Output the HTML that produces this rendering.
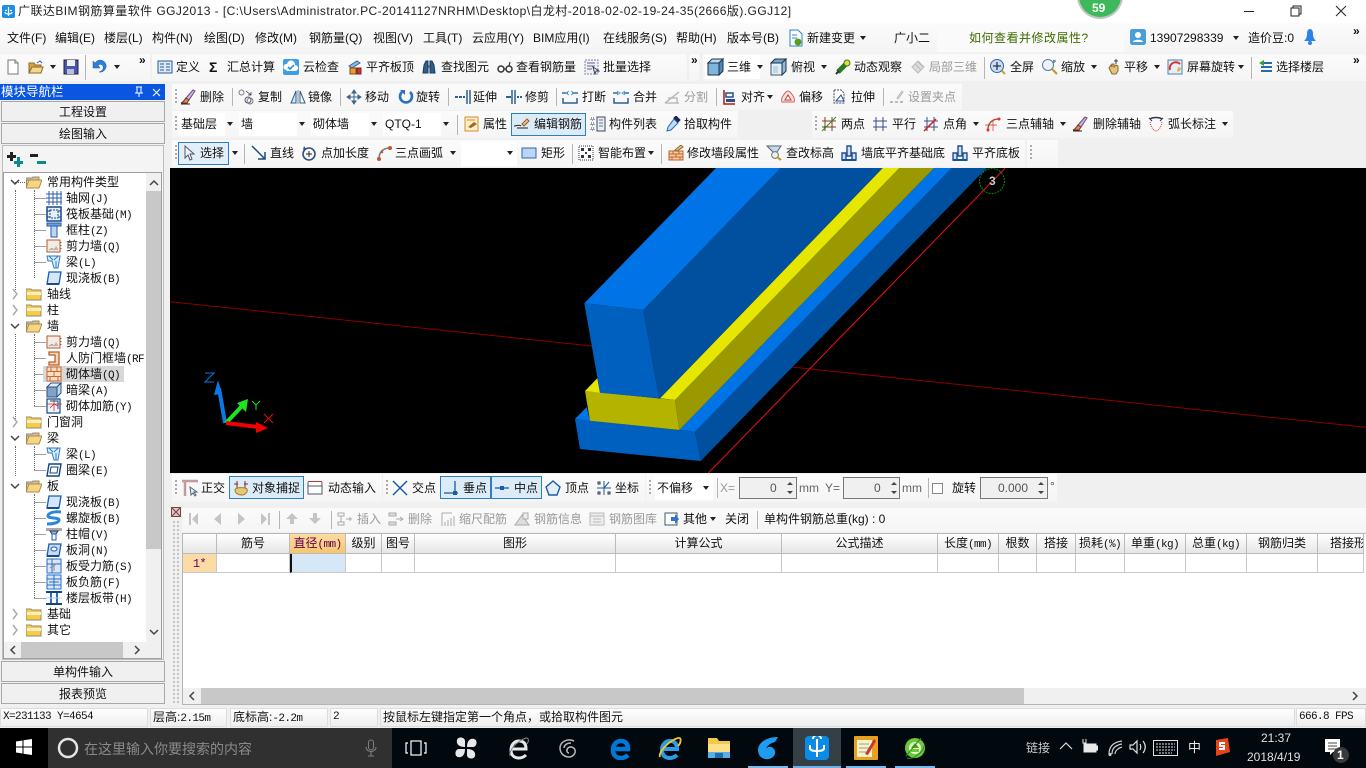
<!DOCTYPE html>
<html lang="zh"><head><meta charset="utf-8"><title>GGJ2013</title>
<style>
html,body{margin:0;padding:0;width:1366px;height:768px;overflow:hidden;background:#f0f0f0}
body{position:relative;font:12px/16px "Liberation Sans","WenQuanYi Zen Hei","Noto Sans CJK SC",sans-serif;color:#111}
.t{position:absolute;white-space:nowrap;height:16px;line-height:16px}
.g{color:#9a9a9a}
.a{position:absolute;width:0;height:0;border:3px solid transparent;border-top:4px solid #222;border-bottom:0}
.s{position:absolute;background:linear-gradient(#fbfbfb,#f5f5f5)}
.b{position:absolute;box-sizing:border-box}
.w{position:absolute;background:#fff}
.sp{position:absolute;width:1px;background:#b5b5b5}
.dots{position:absolute;width:2px;background:repeating-linear-gradient(#aaa 0 2px,transparent 2px 4px)}
svg.u{position:absolute;width:16px;height:16px;overflow:visible}
.m{font:11px/16px "Liberation Mono",monospace;letter-spacing:-.6px}
.btn{position:absolute;left:1px;width:164px;height:21px;box-sizing:border-box;background:#f0f0f0;border:1px solid #a8a8a8;text-align:center;line-height:21px;font-size:12px}
.hc{position:absolute;top:534px;height:20px;box-sizing:border-box;border-right:1px solid #bbb;border-bottom:1px solid #bbb;background:linear-gradient(#fff,#e6e6e6);text-align:center;line-height:19px;overflow:hidden;white-space:nowrap}
.rc{position:absolute;top:554px;height:19px;box-sizing:border-box;border-right:1px solid #c8c8c8;border-bottom:1px solid #c8c8c8;background:#fff}
.st{position:absolute;top:708px;height:19px;box-sizing:border-box;border:1px solid #dcdcdc;background:linear-gradient(#fff,#eee);line-height:17px;padding-left:2px;white-space:nowrap;overflow:hidden}
.bar{position:absolute;top:766px;height:2px;background:#76b9ed}
</style></head>
<body>
<svg width="0" height="0" style="position:absolute">
<defs>
<symbol id="new" viewBox="0 0 16 16"><path d="M3 1h7l3 3v11H3z" fill="#fff" stroke="#777"/><path d="M10 1v3h3" fill="#ddd" stroke="#777"/></symbol>
<symbol id="open" viewBox="0 0 16 16"><path d="M1 4h5l1 2h6v8H1z" fill="#d9a441" stroke="#8a6a2a"/><path d="M1 14l3-6h11l-2 6z" fill="#f4d88a" stroke="#8a6a2a"/><path d="M9 4l3-2 2 2" fill="none" stroke="#2a62b8"/></symbol>
<symbol id="save" viewBox="0 0 16 16"><path d="M1 1h14v14H1z" fill="#4a55b0" stroke="#223"/><path d="M4 1h8v6H4z" fill="#eee"/><path d="M4 10h7v5H4z" fill="#b8c0d8"/></symbol>
<symbol id="undo" viewBox="0 0 16 16"><path d="M5 3a6 6 0 1 1 2 11c3-1 5-3 4-6-1-2-3-2-5-1l2 3H1V3l2 2z" fill="#2f7fd8" stroke="#1b5aa5" stroke-width=".5"/></symbol>
<symbol id="def" viewBox="0 0 16 16"><path d="M1 2h14v12H1z" fill="#dbe9f8" stroke="#2a5c99"/><path d="M3 5h4M3 8h4M3 11h4M9 5h4M9 8h4M9 11h4" stroke="#2a5c99"/></symbol>
<symbol id="cloud" viewBox="0 0 16 16"><rect x="0" y="0" width="16" height="16" rx="2" fill="#3d9fe6"/><path d="M3 11a3 3 0 0 1 1-6 4 4 0 0 1 8 1 3 3 0 0 1 0 6H4z" fill="#fff"/><path d="M5 8l2 2 4-4" fill="none" stroke="#2580cc" stroke-width="1.5"/></symbol>
<symbol id="flat" viewBox="0 0 16 16"><path d="M2 7l8-5 3 2-8 5z" fill="#8fb6dd" stroke="#37689b"/><path d="M3 9h6v6H3z" fill="#e59b3a" stroke="#8b4513"/><path d="M10 9h4v6h-4z" fill="#c33" stroke="#722"/></symbol>
<symbol id="bino" viewBox="0 0 16 16"><path d="M2 14l1-8 2-4h2v12zM14 14l-1-8-2-4H9v12z" fill="#2f5d8c" stroke="#1c3c60"/><path d="M7 6h2v3H7z" fill="#667"/></symbol>
<symbol id="glass" viewBox="0 0 16 16"><circle cx="4" cy="10" r="3" fill="none" stroke="#333" stroke-width="1.5"/><circle cx="12" cy="10" r="3" fill="none" stroke="#333" stroke-width="1.5"/><path d="M7 10h2M12 7l1-4" stroke="#333" stroke-width="1.2"/></symbol>
<symbol id="batch" viewBox="0 0 16 16"><path d="M1 1h13v14H1z" fill="#eef" stroke="#7a8a99" stroke-dasharray="2 1"/><path d="M3 4h8M3 7h8M3 10h5" stroke="#667"/><path d="M9 8l6 4-3 0-1 3z" fill="#fff" stroke="#345"/></symbol>
<symbol id="cube" viewBox="0 0 18 18"><path d="M1 5h11v12H1z" fill="#7fb4dc" stroke="#234"/><path d="M1 5l4-4h11l-4 4z" fill="#b8d8ef" stroke="#234"/><path d="M12 5l4-4v12l-4 4z" fill="#4c87b8" stroke="#234"/></symbol>
<symbol id="cube2" viewBox="0 0 18 18"><path d="M1 5h11v12H1z" fill="#e2eef8" stroke="#456"/><path d="M1 5l4-4h11l-4 4z" fill="#6fa5d0" stroke="#234"/><path d="M12 5l4-4v12l-4 4z" fill="#8fbbdf" stroke="#234"/><path d="M3 8h5v7H3z" fill="#bcd6ea"/></symbol>
<symbol id="orb" viewBox="0 0 16 16"><path d="M3 13L13 3" stroke="#2d7a20" stroke-width="5"/><circle cx="12" cy="4" r="3" fill="#d7e04a" stroke="#576d10"/><path d="M1 15l3-3" stroke="#234" stroke-width="2"/></symbol>
<symbol id="loc" viewBox="0 0 16 16"><path d="M2 8l6-6 6 6-6 6z" fill="#ddd" stroke="#bbb"/><path d="M5 5l6 6M8 3l5 5" stroke="#bbb"/></symbol>
<symbol id="full" viewBox="0 0 16 16"><circle cx="7" cy="7" r="6.5" fill="#cde" stroke="#36a"/><path d="M7 3v8M3 7h8" stroke="#235" stroke-width="1.3"/><path d="M12 12l3 3" stroke="#d79b2c" stroke-width="2"/></symbol>
<symbol id="zoom" viewBox="0 0 16 16"><circle cx="6" cy="6" r="5.5" fill="#eef4fa" stroke="#5a7fa0"/><path d="M10 10l5 5" stroke="#c89320" stroke-width="2"/><path d="M12 1v3M11 2h3" stroke="#36a"/></symbol>
<symbol id="pan" viewBox="0 0 16 16"><path d="M3 9l2-3 1 2V5l2 0v3l2-2 2 1v5l-2 3H6z" fill="#e4c47f" stroke="#85692e"/><path d="M10 0v5M8 2h4" stroke="#345"/></symbol>
<symbol id="rot" viewBox="0 0 16 16"><path d="M1 1h14v14H1z" fill="#e6eff7" stroke="#4a80b8"/><path d="M3 11a6 6 0 0 1 10-6" fill="none" stroke="#d33" stroke-width="2"/><path d="M11 8l3 1-1 3-3 1z" fill="#e2b13c"/></symbol>
<symbol id="floor" viewBox="0 0 16 16"><path d="M3 4h11M3 8h11M3 12h11" stroke="#2b6aa8" stroke-width="2"/><path d="M6 1L1 4l5 3z" fill="#3a9c35"/></symbol>
<symbol id="del" viewBox="0 0 16 16"><path d="M6 9l7-8 2 1-6 9z" fill="#c9b7d6" stroke="#6b4c80"/><path d="M6 9l3 2-2 3H1c3-1 3-3 5-5z" fill="#d98a5a" stroke="#7a3a20"/><path d="M1 15h9" stroke="#222"/></symbol>
<symbol id="copy" viewBox="0 0 16 16"><circle cx="3.5" cy="3.5" r="2.5" fill="none" stroke="#778"/><circle cx="10" cy="11" r="3" fill="none" stroke="#556"/><circle cx="12" cy="12" r="3" fill="none" stroke="#778"/><path d="M8 2l5 4M13 3v3h-3" fill="none" stroke="#334" stroke-width=".8"/></symbol>
<symbol id="mir" viewBox="0 0 16 16"><path d="M1 14L6 2v12z" fill="#d5e4f2" stroke="#2c5f8e"/><path d="M15 14L10 2v12z" fill="#fff" stroke="#2c5f8e"/><path d="M8 1v14" stroke="#888"/></symbol>
<symbol id="mov" viewBox="0 0 16 16"><path d="M8 1v14M1 8h14M8 1L6 4h4zM8 15l-2-3h4zM1 8l3-2v4zM15 8l-3-2v4z" fill="#38668f" stroke="#38668f"/></symbol>
<symbol id="rotate" viewBox="0 0 16 16"><path d="M4 3a6 6 0 1 0 8 0" fill="none" stroke="#2a70c0" stroke-width="2.6"/><path d="M2 1h5v5z" fill="#2a70c0"/></symbol>
<symbol id="ext" viewBox="0 0 16 16"><path d="M0 8h10" stroke="#2e5f92" stroke-dasharray="3 1" stroke-width="2"/><path d="M12 1v14M15 1v14" stroke="#2e5f92" stroke-width="1.5"/></symbol>
<symbol id="trim" viewBox="0 0 16 16"><path d="M0 8h5" stroke="#2e5f92" stroke-width="2"/><path d="M6 1v14M9 1v14" stroke="#2e5f92" stroke-width="1.5"/><path d="M11 8h5" stroke="#2e5f92" stroke-dasharray="2 1" stroke-width="2"/></symbol>
<symbol id="brk" viewBox="0 0 16 16"><path d="M0 4h6M10 4h6" stroke="#2e6ca8" stroke-width="1.5"/><path d="M1 9v5h14V9" fill="none" stroke="#2e5f92" stroke-width="1.5"/><path d="M7 2L4 4l3 2M9 2l3 2-3 2" fill="none" stroke="#4a9fdf"/></symbol>
<symbol id="mrg" viewBox="0 0 16 16"><path d="M0 4h5M11 4h5" stroke="#2e6ca8" stroke-width="1.5"/><path d="M1 9v5h14V9" fill="none" stroke="#2e5f92" stroke-width="1.5"/><path d="M4 2l3 2-3 2M12 2L9 4l3 2" fill="none" stroke="#4a9fdf"/></symbol>
<symbol id="spl" viewBox="0 0 16 16"><path d="M1 14l14-11M1 14h14M4 9h9v5" fill="none" stroke="#bbb" stroke-width="1.5"/></symbol>
<symbol id="ali" viewBox="0 0 16 16"><path d="M2 1v14h11" fill="none" stroke="#b01818" stroke-width="1.5"/><path d="M4 4h7v4H4z" fill="none" stroke="#26508a" stroke-width="1.5"/><path d="M4 10h9v3H4z" fill="#26508a"/></symbol>
<symbol id="off" viewBox="0 0 16 16"><path d="M2 13c-2-4 4-11 6-11s8 7 6 11z" fill="#fbdfd6" stroke="#c66"/><path d="M5 11l3-5 3 5z" fill="#fff" stroke="#b44"/></symbol>
<symbol id="str" viewBox="0 0 16 16"><path d="M3 1h7l3 3v10H3z" fill="#fff" stroke="#446" stroke-dasharray="2 1"/><path d="M5 12l5-6 3 6z" fill="none" stroke="#26508a"/></symbol>
<symbol id="grip" viewBox="0 0 16 16"><path d="M9 9l5-7 1 1-5 7z" fill="#ddd" stroke="#bbb"/><path d="M2 13h3M7 13h3M12 13h3" stroke="#bbb" stroke-width="2"/></symbol>
<symbol id="prop" viewBox="0 0 16 16"><path d="M1 1h13v14H1z" fill="#fbeecb" stroke="#d98f25"/><path d="M4 11l6-5 3 2-6 4z" fill="#a3661e"/><path d="M3 4h8" stroke="#d98f25"/></symbol>
<symbol id="edit" viewBox="0 0 16 16"><path d="M8 8l5-5 2 2-5 5z" fill="#e4c88c" stroke="#a05a20"/><path d="M0 10c3 0 5-2 7 0M3 12h11" stroke="#222" fill="none"/></symbol>
<symbol id="list" viewBox="0 0 16 16"><path d="M7 1h8v14H7z" fill="#e6eff7" stroke="#445"/><path d="M1 2h3v2H1zM1 7h3v2H1zM1 12h3v2H1z" fill="none" stroke="#445" stroke-dasharray="1 1"/><path d="M9 4h4M9 7h4M9 10h4" stroke="#678"/></symbol>
<symbol id="pick" viewBox="0 0 16 16"><path d="M9 3l4 4-7 7-4 1 1-4z" fill="#bcdcf6" stroke="#2a6cb8"/><path d="M9 2l2-2 4 4-2 2z" fill="#225" stroke="#225"/></symbol>
<symbol id="two" viewBox="0 0 16 16"><path d="M4 1v14M11 1v14M1 5h14M1 11h14" stroke="#8b3a1e"/><path d="M1 15L15 1" stroke="#2a8a2a"/><circle cx="4" cy="11" r="1.3" fill="#2a8a2a"/></symbol>
<symbol id="par" viewBox="0 0 16 16"><path d="M4 1v14M11 1v14M1 5h14M1 11h14" stroke="#3a4c8a"/></symbol>
<symbol id="ang" viewBox="0 0 16 16"><path d="M4 1v14M11 1v14M1 5h14M1 11h14" stroke="#3a4c8a"/><path d="M1 15L13 3" stroke="#d42020" stroke-width="1.5"/></symbol>
<symbol id="arc" viewBox="0 0 16 16"><path d="M3 14C3 7 7 3 14 3" fill="none" stroke="#c24a2a" stroke-width="1.5"/><circle cx="3" cy="14" r="1.5" fill="#d33"/><circle cx="14" cy="3" r="1.5" fill="#d33"/><path d="M0 9h12M8 5v10" stroke="#c33" stroke-width=".7"/></symbol>
<symbol id="arcs" viewBox="0 0 16 16"><path d="M3 14C3 7 7 3 14 3" fill="none" stroke="#6a7f8f" stroke-width="1.6"/><circle cx="3" cy="14" r="2" fill="#c8552a"/><circle cx="14" cy="3" r="2" fill="#c8552a"/><circle cx="6" cy="7" r="1.3" fill="#c8552a"/></symbol>
<symbol id="mark" viewBox="0 0 16 16"><path d="M2 3c3-2 9-2 12 0" fill="none" stroke="#335" stroke-width="1.4"/><path d="M2 6c1 6 4 9 6 9s5-3 6-9" fill="none" stroke="#c33" stroke-dasharray="1 1"/><path d="M1 2l3 3M15 2l-3 3" stroke="#335"/></symbol>
<symbol id="sel" viewBox="0 0 16 16"><path d="M3 1v12l3-3 2 5 2-1-2-5h4z" fill="#f0f4fa" stroke="#556"/></symbol>
<symbol id="line" viewBox="0 0 16 16"><path d="M1 1l13 13M14 7v7H7" fill="none" stroke="#1c4a80" stroke-width="1.5"/></symbol>
<symbol id="ptl" viewBox="0 0 16 16"><circle cx="8" cy="9" r="6" fill="none" stroke="#34507a" stroke-width="1.6"/><path d="M8 6v6M5 9h6" stroke="#223"/><path d="M3 1l2 3-3 1z" fill="#34507a"/></symbol>
<symbol id="rect" viewBox="0 0 16 16"><rect x="1" y="3" width="14" height="10" fill="#bcd5f2" stroke="#2f66b0"/></symbol>
<symbol id="smart" viewBox="0 0 16 16"><path d="M1 1h14v14H1z" fill="#fff" stroke="#334" stroke-dasharray="1 1"/><path d="M3 3h3v3H3zM10 3h3v3h-3zM3 10h3v3H3zM10 10h3v3h-3zM7 7h2v2H7z" fill="#334"/></symbol>
<symbol id="brick" viewBox="0 0 16 16"><path d="M1 6h14v9H1z" fill="#f7cfa6" stroke="#c2622c"/><path d="M1 9h14M1 12h14M5 6v3M11 6v3M8 9v3M4 12v3M12 12v3" stroke="#c2622c"/><path d="M7 5l6-5 2 2-6 4z" fill="#dcc58f" stroke="#8d6a2c"/></symbol>
<symbol id="level" viewBox="0 0 16 16"><path d="M1 1h14l-4 6v3l-4 2V7z" fill="#c6dbf0" stroke="#567"/><circle cx="9" cy="10" r="3.4" fill="#eee" stroke="#677"/><path d="M11 12l4 3" stroke="#c08f20" stroke-width="2"/></symbol>
<symbol id="wall" viewBox="0 0 16 16"><path d="M6 1h4v10H6zM1 8h4v7H1zM11 8h4v7h-4z" fill="#cfe0f2" stroke="#214f93" stroke-width="1.4"/><path d="M1 15h14" stroke="#214f93" stroke-width="2"/></symbol>
<symbol id="ortho" viewBox="0 0 18 18"><path d="M1 2h16M4 2v15" stroke="#c49a9a" stroke-width="2.5"/><path d="M9 8l7 5-3 0 2 3-1 1-2-3-2 2z" fill="#e9eef5" stroke="#567"/></symbol>
<symbol id="snap" viewBox="0 0 16 16"><path d="M4 1v10M12 1v10M1 4h4M11 4h4" stroke="#8a2a20"/><path d="M2 10c0-3 10-3 12-1 1 2-1 6-5 6s-7-2-7-5z" fill="#e6c873" stroke="#a07c2c"/></symbol>
<symbol id="dyn" viewBox="0 0 16 16"><path d="M1 2h14" stroke="#c8352c" stroke-width="2"/><path d="M1 2v12h14V2" fill="#fff" stroke="#556"/><path d="M1 6h14" stroke="#556"/></symbol>
<symbol id="cross" viewBox="0 0 16 16"><path d="M1 1l14 14M15 1L1 15" stroke="#1a5aa8" stroke-width="1.5"/></symbol>
<symbol id="perp" viewBox="0 0 16 16"><path d="M1 13h14M12 1v12" stroke="#1a5aa8" stroke-width="1.3"/><rect x="10" y="11" width="4" height="4" fill="#1a5aa8"/></symbol>
<symbol id="mid" viewBox="0 0 16 16"><path d="M1 8h14" stroke="#1a5aa8" stroke-width="1.3"/><rect x="6" y="6" width="4" height="4" fill="#1a5aa8"/></symbol>
<symbol id="vert" viewBox="0 0 16 16"><path d="M8 1l7 6-3 8H4L1 7z" fill="#e2effa" stroke="#1a5aa8" stroke-width="1.4"/></symbol>
<symbol id="coord" viewBox="0 0 16 16"><path d="M8 1v14M1 8h14" stroke="#1a5aa8"/><path d="M8 8l5-6" stroke="#1a5aa8"/><path d="M2 2h2v2H2zM12 12h2v2h-2zM2 12h2v2H2z" fill="none" stroke="#334"/></symbol>
<symbol id="ins" viewBox="0 0 16 16"><path d="M1 2h6v3H1zM1 11h6v3H1zM4 5v6" fill="none" stroke="#aaa"/><path d="M9 8h6M13 6v4" stroke="#aaa"/></symbol>
<symbol id="dl" viewBox="0 0 16 16"><path d="M1 2h7v3H1zM1 11h7v3H1z" fill="#ddd" stroke="#aaa"/><path d="M8 8h7M12 6l3 2-3 2" fill="none" stroke="#aaa"/></symbol>
<symbol id="sc" viewBox="0 0 16 16"><path d="M2 2h10M2 2v13M5 15v-4M8 15V9M11 15V7M14 15V5" stroke="#aaa"/></symbol>
<symbol id="info" viewBox="0 0 16 16"><path d="M1 14l7-10 7 10z" fill="#ddd" stroke="#aaa"/><path d="M9 2h5v6H9z" fill="#eee" stroke="#aaa"/></symbol>
<symbol id="lib" viewBox="0 0 16 16"><path d="M1 2h14v12H1z" fill="#eee" stroke="#bbb"/><path d="M1 5h14M4 8h8M4 11h8" stroke="#bbb"/></symbol>
<symbol id="oth" viewBox="0 0 16 16"><path d="M1 2h12v12H1z" fill="#fff" stroke="#456"/><path d="M7 6h4V3l4 5-4 5v-3H7z" fill="#2f73d0"/></symbol>
<symbol id="fo" viewBox="0 0 16 14"><path d="M0 3h6l1-1h6v3H1L0 13z" fill="#cfc0a0" stroke="#9a8a6a"/><path d="M0 13l3-8h13l-3 8z" fill="#f6d683" stroke="#a88a4a"/></symbol>
<symbol id="fc" viewBox="0 0 16 14"><path d="M0 2h5l1 1h9v10H0z" fill="#f4cb4f" stroke="#9a8a6a"/><path d="M1 5h14v3H1z" fill="#fff0b8"/></symbol>
<symbol id="tgrid" viewBox="0 0 16 16"><path d="M3 1v14M7 1v14M11 1v14M15 1v14M0 4h16M0 8h16M0 12h16" stroke="#2b5ba8"/></symbol>
<symbol id="traft" viewBox="0 0 16 16"><rect x="1" y="1" width="14" height="14" fill="#e6eefa" stroke="#174a88" stroke-width="1.5"/><rect x="4" y="4" width="8" height="8" fill="none" stroke="#174a88" stroke-dasharray="2 1"/><path d="M1 5h3M1 11h3M12 5h3M12 11h3" stroke="#174a88"/></symbol>
<symbol id="tcol" viewBox="0 0 16 16"><path d="M1 1h14v3H1z" fill="#6fa2d4" stroke="#2b5ba8"/><path d="M5 4h6v11H5z" fill="#bcd6f2" stroke="#2b5ba8"/></symbol>
<symbol id="tsh" viewBox="0 0 16 16"><rect x="1" y="2" width="13" height="12" fill="#f4ece2" stroke="#b05a30"/><path d="M3 12l3-2 2 2 2-3 2 3" fill="#bbb" stroke="#999" stroke-dasharray="1 1"/><path d="M15 4v1M15 7v1M15 10v1" stroke="#b05a30"/></symbol>
<symbol id="tbeam" viewBox="0 0 16 16"><path d="M1 2h13l-2 12H8L6 7H2z" fill="#dcebf8" stroke="#2b7ccc"/><path d="M3 2l4 4M12 2L8 6M10 7v7" stroke="#2b7ccc"/></symbol>
<symbol id="tslab" viewBox="0 0 16 16"><path d="M3 2h12l-2 12H1z" fill="#d5e6f8" stroke="#1a5bb5" stroke-width="1.3"/><path d="M1 14h12" stroke="#1a4a90" stroke-width="2"/></symbol>
<symbol id="tdoor" viewBox="0 0 16 16"><path d="M3 2h10v13H3v-3h6V5H3z" fill="#f7d5b8" stroke="#b9602a" stroke-width="1.3"/></symbol>
<symbol id="tbr" viewBox="0 0 16 16"><rect x="1" y="1" width="14" height="14" fill="#fbdcc0" stroke="#c26a35"/><path d="M1 5.500h14M1 10.500h14M5 1v4M11 1v4M8 5v5M4 10v5M12 10v5" stroke="#c26a35"/></symbol>
<symbol id="tdb" viewBox="0 0 16 16"><path d="M1 5h10v10H1z" fill="#7fa3cc" stroke="#2c4f80"/><path d="M1 5l4-4h10l-4 4z" fill="#e4eef8" stroke="#2c4f80"/><path d="M11 5l4-4v10l-4 4z" fill="#c5daef" stroke="#2c4f80"/></symbol>
<symbol id="tre" viewBox="0 0 16 16"><path d="M1 1h13v14H1z" fill="#eef3fa" stroke="#174a88" stroke-width="1.2"/><path d="M0 6h16M8 1v12M4 10l4-4 4 2" fill="none" stroke="#d33" stroke-width=".8"/><path d="M4 3h8v8" fill="none" stroke="#174a88"/></symbol>
<symbol id="tring" viewBox="0 0 16 16"><path d="M3 2h12l-2 12H1z" fill="#fff" stroke="#14437f" stroke-width="1.4"/><path d="M5 5h7l-1 6H4z" fill="#fff" stroke="#14437f"/></symbol>
<symbol id="tsp" viewBox="0 0 16 16"><path d="M15 2C8 1 2 3 2 6s11 1 11 4-7 4-12 4" fill="none" stroke="#2c88d4" stroke-width="3"/></symbol>
<symbol id="tcap" viewBox="0 0 16 16"><path d="M0 2h16v3H0z" fill="#aaa"/><path d="M4 5h8l-2 3H6z" fill="#8fb6e0" stroke="#335"/><path d="M6 8h4v6H6z" fill="#fff" stroke="#1a5bb5"/></symbol>
<symbol id="thl" viewBox="0 0 16 16"><path d="M3 2h12l-2 12H1z" fill="#c6dcf5" stroke="#1a5bb5" stroke-width="1.3"/><ellipse cx="8" cy="7" rx="3" ry="2" fill="#fff" stroke="#1a5bb5"/><path d="M1 14h12" stroke="#1a4a90" stroke-width="2"/></symbol>
<symbol id="tfr" viewBox="0 0 16 16"><rect x="1" y="1" width="14" height="14" fill="#d8e8fa" stroke="#2b6ec4"/><path d="M1 6h14M6 1v14" stroke="#2b6ec4"/><path d="M4 10l8-5M8 6v7" stroke="#888"/></symbol>
<symbol id="tneg" viewBox="0 0 16 16"><rect x="1" y="1" width="14" height="14" fill="#d8e8fa" stroke="#2b6ec4"/><path d="M1 5h14M1 11h14M8 1v14M3 8h10" stroke="#2b6ec4"/></symbol>
<symbol id="tband" viewBox="0 0 16 16"><path d="M0 2h16M0 14h16" stroke="#14437f" stroke-width="2"/><path d="M5 3v10M11 3v10" stroke="#2b6ec4" stroke-width="2"/><path d="M0 8h16" stroke="#bcd"/></symbol>
</defs>
</svg>

<!-- title bar -->
<div class="w" style="left:0;top:0;width:1366px;height:23px"></div>
<svg style="position:absolute;left:2px;top:5px" width="13" height="13" viewBox="0 0 13 13"><rect width="13" height="13" rx="2" fill="#1d8fe6"/><path d="M6.500 2v9M3 7c0 2 2 2 3.500 2S10 9 10 7M3 5.500h2M8 5.500h2" stroke="#fff" fill="none" stroke-width="1.2"/></svg>
<span class="t" style="left:18px;top:3px;letter-spacing:.44px;color:#222">广联达BIM钢筋算量软件 GGJ2013 - [C:\Users\Administrator.PC-20141127NRHM\Desktop\白龙村-2018-02-02-19-24-35(2666版).GGJ12]</span>
<svg style="position:absolute;left:1076px;top:0" width="48" height="20" viewBox="0 0 48 20"><circle cx="24" cy="-4" r="23" fill="#c0c5c0"/><circle cx="24" cy="-4" r="21" fill="#3db85a"/></svg>
<span class="t" style="left:1092px;top:0;color:#fff;font-weight:bold;font-size:12px">59</span>
<svg style="position:absolute;left:1240px;top:4px" width="112" height="14" viewBox="0 0 112 14"><path d="M4 7.500h10" stroke="#222"/><path d="M51 4h8v8h-8zM53 4V2h8v8h-2" fill="none" stroke="#222"/><path d="M96 2l10 10M106 2L96 12" stroke="#222"/></svg>

<!-- menu -->
<div class="b" style="left:0;top:23px;width:1366px;height:30px;background:linear-gradient(#fbfbfb,#f4f4f4)"></div>
<span class="t" style="left:7px;top:30px">文件(F)</span>
<span class="t" style="left:55px;top:30px">编辑(E)</span>
<span class="t" style="left:104px;top:30px">楼层(L)</span>
<span class="t" style="left:152px;top:30px">构件(N)</span>
<span class="t" style="left:204px;top:30px">绘图(D)</span>
<span class="t" style="left:255px;top:30px">修改(M)</span>
<span class="t" style="left:309px;top:30px">钢筋量(Q)</span>
<span class="t" style="left:373px;top:30px">视图(V)</span>
<span class="t" style="left:423px;top:30px">工具(T)</span>
<span class="t" style="left:472px;top:30px">云应用(Y)</span>
<span class="t" style="left:533px;top:30px">BIM应用(I)</span>
<span class="t" style="left:603px;top:30px">在线服务(S)</span>
<span class="t" style="left:676px;top:30px">帮助(H)</span>
<span class="t" style="left:727px;top:30px">版本号(B)</span>
<svg class="u" style="left:788px;top:30px" viewBox="0 0 16 16"><path d="M2 0h8l4 4v12H2z" fill="#fff" stroke="#2d80c8"/><path d="M4 5h5M4 8h5" stroke="#2d80c8"/><circle cx="10" cy="12" r="3.500" fill="#5aa020"/></svg>
<span class="t" style="left:807px;top:30px">新建变更</span><i class="a" style="left:860px;top:36px"></i>
<span class="t" style="left:894px;top:30px">广小二</span>
<div class="w" style="left:937px;top:24px;width:187px;height:28px;background:#fafafa"></div>
<span class="t" style="left:969px;top:30px;color:#3f6b00;font-size:12px;letter-spacing:.5px">如何查看并修改属性?</span>
<svg class="u" style="left:1130px;top:29px" viewBox="0 0 16 16"><rect width="16" height="16" rx="2.500" fill="#4a9ed8"/><circle cx="8" cy="6" r="3" fill="#fff"/><path d="M3 13c0-3 10-3 10 0z" fill="#fff"/></svg>
<span class="t" style="left:1150px;top:30px">13907298339</span><i class="a" style="left:1233px;top:36px"></i>
<span class="t" style="left:1248px;top:30px">造价豆:0</span>
<svg class="u" style="left:1302px;top:29px" viewBox="0 0 16 16"><path d="M8 0c2 0 3 2 3 5s1 5 3 7H2c2-2 3-4 3-7s1-5 3-5z" fill="#2b82e8"/><circle cx="8" cy="14" r="2" fill="#2b82e8"/></svg>
<span class="t" style="left:1353px;top:23px;font-weight:bold">»</span>

<!-- toolbar row 1 -->
<div class="s" style="left:0;top:54px;width:150px;height:27px"></div>
<div class="s" style="left:152px;top:54px;width:535px;height:27px"></div>
<div class="s" style="left:689px;top:54px;width:10px;height:27px"></div>
<div class="s" style="left:703px;top:54px;width:663px;height:27px"></div>
<svg class="u" style="left:5px;top:59px"><use href="#new"/></svg>
<svg class="u" style="left:28px;top:59px"><use href="#open"/></svg><i class="a" style="left:50px;top:65px"></i>
<svg class="u" style="left:63px;top:59px"><use href="#save"/></svg>
<div class="sp" style="left:85px;top:55px;height:25px"></div>
<svg class="u" style="left:92px;top:58px"><use href="#undo"/></svg><i class="a" style="left:114px;top:65px"></i>
<span class="t" style="left:139px;top:52px;font-weight:bold">»</span>
<svg class="u" style="left:157px;top:59px"><use href="#def"/></svg><span class="t" style="left:176px;top:59px">定义</span>
<span class="t" style="left:209px;top:59px;font-weight:bold;font-size:14px">Σ</span><span class="t" style="left:227px;top:59px">汇总计算</span>
<svg class="u" style="left:283px;top:59px"><use href="#cloud"/></svg><span class="t" style="left:303px;top:59px">云检查</span>
<svg class="u" style="left:347px;top:59px"><use href="#flat"/></svg><span class="t" style="left:366px;top:59px">平齐板顶</span>
<svg class="u" style="left:421px;top:59px"><use href="#bino"/></svg><span class="t" style="left:441px;top:59px">查找图元</span>
<svg class="u" style="left:497px;top:59px"><use href="#glass"/></svg><span class="t" style="left:516px;top:59px">查看钢筋量</span>
<svg class="u" style="left:584px;top:59px"><use href="#batch"/></svg><span class="t" style="left:603px;top:59px">批量选择</span>
<span class="t" style="left:691px;top:52px;font-weight:bold">»</span>
<div class="w" style="left:705px;top:55px;width:55px;height:24px"></div>
<svg style="position:absolute;left:707px;top:58px" width="18" height="18"><use href="#cube"/></svg><span class="t" style="left:727px;top:59px">三维</span><i class="a" style="left:757px;top:65px"></i>
<svg style="position:absolute;left:770px;top:58px" width="18" height="18"><use href="#cube2"/></svg><span class="t" style="left:791px;top:59px">俯视</span><i class="a" style="left:821px;top:65px"></i>
<svg class="u" style="left:835px;top:59px"><use href="#orb"/></svg><span class="t" style="left:854px;top:59px">动态观察</span>
<svg class="u" style="left:910px;top:59px"><use href="#loc"/></svg><span class="t g" style="left:929px;top:59px">局部三维</span>
<div class="sp" style="left:984px;top:57px;height:22px"></div>
<svg class="u" style="left:990px;top:59px"><use href="#full"/></svg><span class="t" style="left:1010px;top:59px">全屏</span>
<svg class="u" style="left:1042px;top:59px"><use href="#zoom"/></svg><span class="t" style="left:1061px;top:59px">缩放</span><i class="a" style="left:1091px;top:65px"></i>
<svg class="u" style="left:1106px;top:59px"><use href="#pan"/></svg><span class="t" style="left:1124px;top:59px">平移</span><i class="a" style="left:1154px;top:65px"></i>
<svg class="u" style="left:1167px;top:59px"><use href="#rot"/></svg><span class="t" style="left:1187px;top:59px">屏幕旋转</span><i class="a" style="left:1238px;top:65px"></i>
<div class="sp" style="left:1251px;top:57px;height:22px"></div>
<svg class="u" style="left:1258px;top:59px"><use href="#floor"/></svg><span class="t" style="left:1276px;top:59px">选择楼层</span>
<span class="t" style="left:1353px;top:52px;font-weight:bold">»</span>

<!-- nav panel -->
<div class="b" style="left:0;top:84px;width:165px;height:16px;background:#0a56e0"></div>
<span class="t" style="left:1px;top:84px;color:#fff;font-size:12.500px">模块导航栏</span>
<svg style="position:absolute;left:132px;top:85px" width="30" height="14" viewBox="0 0 30 14"><path d="M4 2h6M5 2v6h4V2M3 8h8M7 8v4" stroke="#fff" fill="none"/><path d="M21 4l7 7M28 4l-7 7" stroke="#fff"/></svg>
<div class="btn" style="top:101px">工程设置</div>
<div class="btn" style="top:123px">绘图输入</div>
<div class="b" style="left:2px;top:145px;width:162px;height:515px;background:#f4f4f4;border:1px solid #bdbdbd"></div>
<svg style="position:absolute;left:0;top:145px" width="60" height="27" viewBox="0 145 60 27"><g fill="#222"><path d="M7 155h9v3H7zM10 152h3v9h-3z"/><path d="M30 154h8v3h-8z"/></g><g fill="#0d8a8a"><path d="M14 161h9v3h-9zM17 157h3v10h-3z"/><path d="M37 161h9v3h-9z"/></g></svg>
<div class="b" style="left:3px;top:172px;width:159px;height:487px;background:#fff;border:1px solid #a0a0a0"></div>

<!-- tree lines -->
<div class="b" style="left:15px;top:190px;height:100px;border-left:1px dotted #666"></div>
<div class="b" style="left:15px;top:334px;height:85px;border-left:1px dotted #666"></div>
<div class="b" style="left:15px;top:446px;height:30px;border-left:1px dotted #666"></div>
<div class="b" style="left:34px;top:190px;height:88px;border-left:1px dotted #666"></div>
<div class="b" style="left:34px;top:334px;height:72px;border-left:1px dotted #666"></div>
<div class="b" style="left:34px;top:446px;height:24px;border-left:1px dotted #666"></div>
<div class="b" style="left:34px;top:494px;height:104px;border-left:1px dotted #666"></div>
<div class="b" style="left:15px;top:182px;width:10px;border-top:1px dotted #666;height:0"></div>
<div class="b" style="left:34px;top:198px;width:12px;height:80px;background:repeating-linear-gradient(#666 0 1px,#fff0 1px 16px);opacity:.6"></div>
<div class="b" style="left:34px;top:342px;width:12px;height:65px;background:repeating-linear-gradient(#666 0 1px,#fff0 1px 16px);opacity:.6"></div>
<div class="b" style="left:34px;top:454px;width:12px;height:17px;background:repeating-linear-gradient(#666 0 1px,#fff0 1px 16px);opacity:.6"></div>
<div class="b" style="left:34px;top:502px;width:12px;height:97px;background:repeating-linear-gradient(#666 0 1px,#fff0 1px 16px);opacity:.6"></div>
<div class="b" style="left:43px;top:366px;width:81px;height:16px;background:#d8d8d8"></div>

<!-- tree expanders -->
<svg style="position:absolute;left:9px;top:176px" width="12" height="470" viewBox="0 0 12 470">
<g fill="none" stroke="#444" stroke-width="1.500"><path d="M2 4l4 4 4-4"/><path d="M2 148l4 4 4-4"/><path d="M2 260l4 4 4-4"/><path d="M2 308l4 4 4-4"/></g>
<g fill="none" stroke="#aaa" stroke-width="1.500"><path d="M4 113l4 5-4 5"/><path d="M4 129l4 5-4 5"/><path d="M4 241l4 5-4 5"/><path d="M4 433l4 5-4 5"/><path d="M4 449l4 5-4 5"/></g>
</svg>
<svg class="u" style="left:26px;top:175px;height:14px"><use href="#fo"/></svg><span class="t" style="left:47px;top:174px">常用构件类型</span>
<svg class="u" style="left:46px;top:190px"><use href="#tgrid"/></svg><span class="t" style="left:66px;top:190px">轴网<b class="m" style="font-weight:400">(J)</b></span>
<svg class="u" style="left:46px;top:206px"><use href="#traft"/></svg><span class="t" style="left:66px;top:206px">筏板基础<b class="m" style="font-weight:400">(M)</b></span>
<svg class="u" style="left:46px;top:222px"><use href="#tcol"/></svg><span class="t" style="left:66px;top:222px">框柱<b class="m" style="font-weight:400">(Z)</b></span>
<svg class="u" style="left:46px;top:238px"><use href="#tsh"/></svg><span class="t" style="left:66px;top:238px">剪力墙<b class="m" style="font-weight:400">(Q)</b></span>
<svg class="u" style="left:46px;top:254px"><use href="#tbeam"/></svg><span class="t" style="left:66px;top:254px">梁<b class="m" style="font-weight:400">(L)</b></span>
<svg class="u" style="left:46px;top:270px"><use href="#tslab"/></svg><span class="t" style="left:66px;top:270px">现浇板<b class="m" style="font-weight:400">(B)</b></span>
<svg class="u" style="left:26px;top:287px;height:14px"><use href="#fc"/></svg><span class="t" style="left:47px;top:286px">轴线</span>
<svg class="u" style="left:26px;top:303px;height:14px"><use href="#fc"/></svg><span class="t" style="left:47px;top:302px">柱</span>
<svg class="u" style="left:26px;top:319px;height:14px"><use href="#fo"/></svg><span class="t" style="left:47px;top:318px">墙</span>
<svg class="u" style="left:46px;top:334px"><use href="#tsh"/></svg><span class="t" style="left:66px;top:334px">剪力墙<b class="m" style="font-weight:400">(Q)</b></span>
<svg class="u" style="left:46px;top:350px"><use href="#tdoor"/></svg><span class="t" style="left:66px;top:350px;width:79px;overflow:hidden">人防门框墙<b class="m" style="font-weight:400">(RF</b></span>
<svg class="u" style="left:46px;top:366px"><use href="#tbr"/></svg><span class="t" style="left:66px;top:366px">砌体墙<b class="m" style="font-weight:400">(Q)</b></span>
<svg class="u" style="left:46px;top:382px"><use href="#tdb"/></svg><span class="t" style="left:66px;top:382px">暗梁<b class="m" style="font-weight:400">(A)</b></span>
<svg class="u" style="left:46px;top:398px"><use href="#tre"/></svg><span class="t" style="left:66px;top:398px">砌体加筋<b class="m" style="font-weight:400">(Y)</b></span>
<svg class="u" style="left:26px;top:415px;height:14px"><use href="#fc"/></svg><span class="t" style="left:47px;top:414px">门窗洞</span>
<svg class="u" style="left:26px;top:431px;height:14px"><use href="#fo"/></svg><span class="t" style="left:47px;top:430px">梁</span>
<svg class="u" style="left:46px;top:446px"><use href="#tbeam"/></svg><span class="t" style="left:66px;top:446px">梁<b class="m" style="font-weight:400">(L)</b></span>
<svg class="u" style="left:46px;top:462px"><use href="#tring"/></svg><span class="t" style="left:66px;top:462px">圈梁<b class="m" style="font-weight:400">(E)</b></span>
<svg class="u" style="left:26px;top:479px;height:14px"><use href="#fo"/></svg><span class="t" style="left:47px;top:478px">板</span>
<svg class="u" style="left:46px;top:494px"><use href="#tslab"/></svg><span class="t" style="left:66px;top:494px">现浇板<b class="m" style="font-weight:400">(B)</b></span>
<svg class="u" style="left:46px;top:510px"><use href="#tsp"/></svg><span class="t" style="left:66px;top:510px">螺旋板<b class="m" style="font-weight:400">(B)</b></span>
<svg class="u" style="left:46px;top:526px"><use href="#tcap"/></svg><span class="t" style="left:66px;top:526px">柱帽<b class="m" style="font-weight:400">(V)</b></span>
<svg class="u" style="left:46px;top:542px"><use href="#thl"/></svg><span class="t" style="left:66px;top:542px">板洞<b class="m" style="font-weight:400">(N)</b></span>
<svg class="u" style="left:46px;top:558px"><use href="#tfr"/></svg><span class="t" style="left:66px;top:558px">板受力筋<b class="m" style="font-weight:400">(S)</b></span>
<svg class="u" style="left:46px;top:574px"><use href="#tneg"/></svg><span class="t" style="left:66px;top:574px">板负筋<b class="m" style="font-weight:400">(F)</b></span>
<svg class="u" style="left:46px;top:590px"><use href="#tband"/></svg><span class="t" style="left:66px;top:590px">楼层板带<b class="m" style="font-weight:400">(H)</b></span>
<svg class="u" style="left:26px;top:607px;height:14px"><use href="#fc"/></svg><span class="t" style="left:47px;top:606px">基础</span>
<svg class="u" style="left:26px;top:623px;height:14px"><use href="#fc"/></svg><span class="t" style="left:47px;top:622px">其它</span>

<!-- tree scrollbars -->
<div class="b" style="left:146px;top:173px;width:15px;height:469px;background:#f0f0f0"></div>
<div class="b" style="left:146px;top:191px;width:15px;height:358px;background:#c8c8c8"></div>
<svg style="position:absolute;left:149px;top:179px" width="10" height="8"><path d="M1 6l4-4 4 4" fill="none" stroke="#444" stroke-width="1.500"/></svg>
<svg style="position:absolute;left:149px;top:628px" width="10" height="8"><path d="M1 2l4 4 4-4" fill="none" stroke="#444" stroke-width="1.500"/></svg>
<div class="b" style="left:4px;top:642px;width:157px;height:16px;background:#f0f0f0"></div>
<div class="b" style="left:21px;top:642px;width:102px;height:16px;background:#c8c8c8"></div>
<svg style="position:absolute;left:9px;top:645px" width="8" height="10"><path d="M6 1L2 5l4 4" fill="none" stroke="#444" stroke-width="1.500"/></svg>
<svg style="position:absolute;left:133px;top:645px" width="8" height="10"><path d="M2 1l4 4-4 4" fill="none" stroke="#444" stroke-width="1.500"/></svg>
<div class="btn" style="top:661px">单构件输入</div>
<div class="btn" style="top:683px">报表预览</div>

<!-- toolbar row 2 (y=97) -->
<div class="s" style="left:172px;top:84px;width:790px;height:26px"></div>
<div class="dots" style="left:175px;top:89px;height:16px"></div>
<svg class="u" style="left:180px;top:89px"><use href="#del"/></svg><span class="t" style="left:200px;top:89px">删除</span>
<div class="sp" style="left:232px;top:88px;height:18px"></div>
<svg class="u" style="left:238px;top:89px"><use href="#copy"/></svg><span class="t" style="left:258px;top:89px">复制</span>
<svg class="u" style="left:290px;top:89px"><use href="#mir"/></svg><span class="t" style="left:308px;top:89px">镜像</span>
<div class="sp" style="left:340px;top:88px;height:18px"></div>
<svg class="u" style="left:346px;top:89px"><use href="#mov"/></svg><span class="t" style="left:365px;top:89px">移动</span>
<svg class="u" style="left:398px;top:89px"><use href="#rotate"/></svg><span class="t" style="left:416px;top:89px">旋转</span>
<div class="sp" style="left:448px;top:88px;height:18px"></div>
<svg class="u" style="left:455px;top:89px"><use href="#ext"/></svg><span class="t" style="left:473px;top:89px">延伸</span>
<svg class="u" style="left:506px;top:89px"><use href="#trim"/></svg><span class="t" style="left:525px;top:89px">修剪</span>
<div class="sp" style="left:556px;top:88px;height:18px"></div>
<svg class="u" style="left:562px;top:89px"><use href="#brk"/></svg><span class="t" style="left:582px;top:89px">打断</span>
<svg class="u" style="left:613px;top:89px"><use href="#mrg"/></svg><span class="t" style="left:633px;top:89px">合并</span>
<svg class="u" style="left:664px;top:89px"><use href="#spl"/></svg><span class="t g" style="left:684px;top:89px">分割</span>
<div class="sp" style="left:716px;top:88px;height:18px"></div>
<svg class="u" style="left:722px;top:89px"><use href="#ali"/></svg><span class="t" style="left:741px;top:89px">对齐</span><i class="a" style="left:767px;top:95px"></i>
<svg class="u" style="left:780px;top:89px"><use href="#off"/></svg><span class="t" style="left:799px;top:89px">偏移</span>
<svg class="u" style="left:831px;top:89px"><use href="#str"/></svg><span class="t" style="left:851px;top:89px">拉伸</span>
<div class="sp" style="left:883px;top:88px;height:18px"></div>
<svg class="u" style="left:888px;top:89px"><use href="#grip"/></svg><span class="t g" style="left:908px;top:89px">设置夹点</span>

<!-- toolbar row 3 (y=124) -->
<div class="s" style="left:172px;top:111px;width:566px;height:27px"></div>
<div class="s" style="left:812px;top:111px;width:421px;height:27px"></div>
<div class="dots" style="left:175px;top:116px;height:16px"></div>
<div class="w" style="left:178px;top:113px;width:47px;height:23px"></div><span class="t" style="left:181px;top:116px">基础层</span><i class="a" style="left:227px;top:122px"></i>
<div class="w" style="left:239px;top:113px;width:58px;height:23px"></div><span class="t" style="left:241px;top:116px">墙</span><i class="a" style="left:299px;top:122px"></i>
<div class="w" style="left:311px;top:113px;width:58px;height:23px"></div><span class="t" style="left:313px;top:116px">砌体墙</span><i class="a" style="left:371px;top:122px"></i>
<div class="w" style="left:383px;top:113px;width:58px;height:23px"></div><span class="t" style="left:385px;top:116px">QTQ-1</span><i class="a" style="left:443px;top:122px"></i>
<div class="sp" style="left:457px;top:115px;height:20px"></div>
<svg class="u" style="left:464px;top:116px"><use href="#prop"/></svg><span class="t" style="left:483px;top:116px">属性</span>
<div class="b" style="left:511px;top:113px;width:75px;height:23px;background:#dcebf8;border:1px solid #2a7fc8"></div>
<svg class="u" style="left:514px;top:116px"><use href="#edit"/></svg><span class="t" style="left:534px;top:116px">编辑钢筋</span>
<svg class="u" style="left:590px;top:116px"><use href="#list"/></svg><span class="t" style="left:609px;top:116px">构件列表</span>
<svg class="u" style="left:665px;top:116px"><use href="#pick"/></svg><span class="t" style="left:684px;top:116px">拾取构件</span>
<div class="dots" style="left:815px;top:116px;height:16px"></div>
<svg class="u" style="left:821px;top:116px"><use href="#two"/></svg><span class="t" style="left:841px;top:116px">两点</span>
<svg class="u" style="left:872px;top:116px"><use href="#par"/></svg><span class="t" style="left:892px;top:116px">平行</span>
<svg class="u" style="left:923px;top:116px"><use href="#ang"/></svg><span class="t" style="left:943px;top:116px">点角</span><i class="a" style="left:973px;top:122px"></i>
<svg class="u" style="left:985px;top:116px"><use href="#arc"/></svg><span class="t" style="left:1006px;top:116px">三点辅轴</span><i class="a" style="left:1060px;top:122px"></i>
<svg class="u" style="left:1072px;top:116px"><use href="#del"/></svg><span class="t" style="left:1093px;top:116px">删除辅轴</span>
<svg class="u" style="left:1148px;top:116px"><use href="#mark"/></svg><span class="t" style="left:1168px;top:116px">弧长标注</span><i class="a" style="left:1222px;top:122px"></i>

<!-- toolbar row 4 (y=153) -->
<div class="s" style="left:172px;top:140px;width:853px;height:27px"></div>
<div class="s" style="left:1027px;top:140px;width:31px;height:27px"></div>
<div class="dots" style="left:175px;top:145px;height:16px"></div>
<div class="b" style="left:178px;top:142px;width:51px;height:23px;background:#e2eef8;border:1px solid #2a7fc8"></div>
<svg class="u" style="left:182px;top:145px"><use href="#sel"/></svg><span class="t" style="left:200px;top:145px">选择</span><i class="a" style="left:232px;top:151px"></i>
<div class="sp" style="left:244px;top:144px;height:20px"></div>
<svg class="u" style="left:251px;top:145px"><use href="#line"/></svg><span class="t" style="left:270px;top:145px">直线</span>
<svg class="u" style="left:301px;top:145px"><use href="#ptl"/></svg><span class="t" style="left:321px;top:145px">点加长度</span>
<svg class="u" style="left:376px;top:145px"><use href="#arcs"/></svg><span class="t" style="left:395px;top:145px">三点画弧</span><i class="a" style="left:450px;top:151px"></i>
<div class="w" style="left:461px;top:142px;width:56px;height:24px"></div><i class="a" style="left:507px;top:151px"></i>
<svg class="u" style="left:521px;top:145px"><use href="#rect"/></svg><span class="t" style="left:541px;top:145px">矩形</span>
<div class="sp" style="left:572px;top:144px;height:20px"></div>
<svg class="u" style="left:578px;top:145px"><use href="#smart"/></svg><span class="t" style="left:598px;top:145px">智能布置</span><i class="a" style="left:648px;top:151px"></i>
<div class="sp" style="left:661px;top:144px;height:20px"></div>
<svg class="u" style="left:668px;top:145px"><use href="#brick"/></svg><span class="t" style="left:687px;top:145px">修改墙段属性</span>
<svg class="u" style="left:766px;top:145px"><use href="#level"/></svg><span class="t" style="left:786px;top:145px">查改标高</span>
<svg class="u" style="left:841px;top:145px"><use href="#wall"/></svg><span class="t" style="left:861px;top:145px">墙底平齐基础底</span>
<svg class="u" style="left:952px;top:145px"><use href="#wall"/></svg><span class="t" style="left:972px;top:145px">平齐底板</span>
<div class="dots" style="left:1030px;top:145px;height:16px"></div>

<!-- 3D viewport -->
<svg style="position:absolute;left:170px;top:168px" width="1196" height="305" viewBox="170 168 1196 305">
<rect x="170" y="168" width="1196" height="305" fill="#000"/>
<path d="M170 301.700L1366 427.300" stroke="#8b0000" stroke-width="1"/>
<path d="M708.300 473L1005 168.300" stroke="#ec1020" stroke-width="1"/>
<circle cx="992" cy="181" r="12.500" fill="none" stroke="#0a8a0a" stroke-dasharray="2 1"/>
<polygon points="951.700,168 986.700,168 700.700,461 695,431.700" fill="#00509f"/>
<polygon points="934,168 951.700,168 695,431.700 679.300,430" fill="#0073e6"/>
<polygon points="575,419 695,431.700 700.700,461 580,449" fill="#0060bf"/>
<polygon points="575,419 586.700,407 590,420.700" fill="#0073e6"/>
<polygon points="899.300,168 934,168 679.300,430 675,400" fill="#9a9a00"/>
<polygon points="882.700,168 899.300,168 675,400 660,398.300" fill="#e6e600"/>
<polygon points="585,391 675,400 679.300,430 590,420.700" fill="#b3b300"/>
<polygon points="585,391 597.300,378.300 600,392.700" fill="#e6e600"/>
<polygon points="716,168 780.700,168 643.300,310 584.300,303.300" fill="#0073e6"/>
<polygon points="780.700,168 882.700,168 660,398.300 659,398.300 643.300,310" fill="#00509f"/>
<polygon points="584.300,303.300 643.300,310 659,398.300 600,392.700" fill="#0060bf"/>
<path d="M225 423L219 388" stroke="#0a78e6" stroke-width="4"/><polygon points="218,380 222,394 214,395" fill="#0a78e6"/>
<path d="M226 423L243 405" stroke="#1ee61e" stroke-width="4"/><polygon points="248,399 246,412 237,403" fill="#1ee61e"/>
<path d="M226 423L258 427" stroke="#f00000" stroke-width="4"/><polygon points="268,428 256,433 256,422" fill="#f00000"/>
<path d="M205 373h9l-9 9h9" fill="none" stroke="#0a78e6"/>
<path d="M252 401l4 4 4-4M256 405v5" fill="none" stroke="#1ee61e"/>
<path d="M264 414l9 9M273 414l-9 9" stroke="#e01010"/>
</svg>
<span class="t" style="left:989px;top:173px;color:#ccc;font-weight:bold">3</span>

<!-- snap bar (y=488) -->
<div class="s" style="left:172px;top:474px;width:210px;height:28px"></div>
<div class="s" style="left:383px;top:474px;width:262px;height:28px"></div>
<div class="s" style="left:646px;top:474px;width:411px;height:28px"></div>
<div class="dots" style="left:175px;top:480px;height:16px"></div>
<svg class="u" style="left:181px;top:479px;width:18px;height:18px"><use href="#ortho"/></svg><span class="t" style="left:201px;top:480px">正交</span>
<div class="b" style="left:229px;top:476px;width:75px;height:23px;background:#dcebf8;border:1px solid #2a7fc8"></div>
<svg class="u" style="left:233px;top:480px"><use href="#snap"/></svg><span class="t" style="left:252px;top:480px">对象捕捉</span>
<svg class="u" style="left:307px;top:480px"><use href="#dyn"/></svg><span class="t" style="left:328px;top:480px">动态输入</span>
<div class="dots" style="left:386px;top:480px;height:16px"></div>
<svg class="u" style="left:392px;top:480px"><use href="#cross"/></svg><span class="t" style="left:412px;top:480px">交点</span>
<div class="b" style="left:440px;top:476px;width:51px;height:23px;background:#dcebf8;border:1px solid #2a7fc8"></div>
<svg class="u" style="left:443px;top:480px"><use href="#perp"/></svg><span class="t" style="left:463px;top:480px">垂点</span>
<div class="b" style="left:491px;top:476px;width:51px;height:23px;background:#dcebf8;border:1px solid #2a7fc8"></div>
<svg class="u" style="left:494px;top:480px"><use href="#mid"/></svg><span class="t" style="left:514px;top:480px">中点</span>
<svg class="u" style="left:545px;top:480px"><use href="#vert"/></svg><span class="t" style="left:565px;top:480px">顶点</span>
<svg class="u" style="left:596px;top:480px"><use href="#coord"/></svg><span class="t" style="left:615px;top:480px">坐标</span>
<div class="dots" style="left:649px;top:480px;height:16px"></div>
<div class="w" style="left:655px;top:476px;width:58px;height:24px"></div><span class="t" style="left:657px;top:480px">不偏移</span><i class="a" style="left:703px;top:486px"></i>
<div class="sp" style="left:717px;top:478px;height:20px"></div>
<span class="t g" style="left:720px;top:480px">X=</span>
<div class="b" style="left:739px;top:477px;width:58px;height:22px;background:#f0f0f0;border:1px solid #777"></div><span class="t" style="left:770px;top:480px;color:#555">0</span>
<span class="t" style="left:799px;top:480px;color:#666">mm</span><span class="t" style="left:825px;top:480px;color:#666">Y=</span>
<div class="b" style="left:843px;top:477px;width:57px;height:22px;background:#f0f0f0;border:1px solid #777"></div><span class="t" style="left:874px;top:480px;color:#555">0</span>
<span class="t" style="left:902px;top:480px;color:#666">mm</span>
<div class="sp" style="left:928px;top:478px;height:20px"></div>
<div class="b" style="left:932px;top:483px;width:11px;height:11px;background:#fff;border:1px solid #888"></div>
<span class="t" style="left:952px;top:480px">旋转</span>
<div class="b" style="left:980px;top:477px;width:68px;height:22px;background:#f0f0f0;border:1px solid #777"></div><span class="t" style="left:998px;top:480px;color:#555">0.000</span>
<svg style="position:absolute;left:785px;top:479px" width="10" height="18"><path d="M2 6l3-3 3 3zM2 12l3 3 3-3z" fill="#444"/></svg>
<svg style="position:absolute;left:889px;top:479px" width="10" height="18"><path d="M2 6l3-3 3 3zM2 12l3 3 3-3z" fill="#444"/></svg>
<svg style="position:absolute;left:1036px;top:479px" width="10" height="18"><path d="M2 6l3-3 3 3zM2 12l3 3 3-3z" fill="#444"/></svg>
<span class="t" style="left:1050px;top:478px;color:#444">°</span>

<!-- lower panel -->
<svg style="position:absolute;left:171px;top:507px" width="10" height="10"><rect x=".5" y=".5" width="9" height="9" fill="#d8c8c8" stroke="#555"/><path d="M1 1l8 8M9 1L1 9" stroke="#a03030"/></svg>
<div class="dots" style="left:173px;top:521px;height:182px;background:repeating-linear-gradient(#c4c4c4 0 2px,transparent 2px 4px)"></div>
<div class="dots" style="left:177px;top:521px;height:182px;background:repeating-linear-gradient(#c4c4c4 0 2px,transparent 2px 4px)"></div>
<div class="s" style="left:182px;top:508px;width:1184px;height:24px"></div>
<svg style="position:absolute;left:188px;top:512px" width="85" height="14" viewBox="0 0 85 14" fill="#c4c4c4"><path d="M1 1h2v12H1zM10 1v12L4 7z"/><path d="M33 1v12l-7-6z"/><path d="M50 1v12l7-6z"/><path d="M73 1v12l6-6zM80 1h2v12h-2z"/></svg>
<div class="sp" style="left:279px;top:511px;height:18px"></div>
<svg style="position:absolute;left:285px;top:512px" width="40" height="14" viewBox="0 0 40 14" fill="#c4c4c4"><path d="M7 1l6 6H9v5H5V7H1z"/><path d="M30 12l-6-6h4V1h4v5h4z"/></svg>
<div class="sp" style="left:331px;top:511px;height:18px"></div>
<svg class="u" style="left:337px;top:511px"><use href="#ins"/></svg><span class="t g" style="left:357px;top:511px">插入</span>
<svg class="u" style="left:388px;top:511px"><use href="#dl"/></svg><span class="t g" style="left:408px;top:511px">删除</span>
<svg class="u" style="left:440px;top:511px"><use href="#sc"/></svg><span class="t g" style="left:459px;top:511px">缩尺配筋</span>
<svg class="u" style="left:514px;top:511px"><use href="#info"/></svg><span class="t g" style="left:534px;top:511px">钢筋信息</span>
<svg class="u" style="left:589px;top:511px"><use href="#lib"/></svg><span class="t g" style="left:609px;top:511px">钢筋图库</span>
<svg class="u" style="left:664px;top:511px"><use href="#oth"/></svg><span class="t" style="left:683px;top:511px">其他</span><i class="a" style="left:710px;top:517px"></i>
<span class="t" style="left:725px;top:511px">关闭</span>
<div class="sp" style="left:757px;top:511px;height:18px"></div>
<span class="t" style="left:764px;top:511px">单构件钢筋总重(kg) : 0</span>

<!-- grid -->
<div class="b" style="left:182px;top:533px;width:1184px;height:172px;background:#fff;border:1px solid #b5b5b5;border-right:0"></div>
<div class="hc" style="left:183px;width:34px"></div>
<div class="hc" style="left:217px;width:73px">筋号</div>
<div class="hc" style="left:290px;width:56px;background:linear-gradient(#fcdca0,#f6c670);color:#5a0050">直径<b class="m" style="font-weight:400">(mm)</b></div>
<div class="hc" style="left:346px;width:36px">级别</div>
<div class="hc" style="left:382px;width:33px">图号</div>
<div class="hc" style="left:415px;width:201px">图形</div>
<div class="hc" style="left:616px;width:166px">计算公式</div>
<div class="hc" style="left:782px;width:156px">公式描述</div>
<div class="hc" style="left:938px;width:61px">长度<b class="m" style="font-weight:400">(mm)</b></div>
<div class="hc" style="left:999px;width:38px">根数</div>
<div class="hc" style="left:1037px;width:39px">搭接</div>
<div class="hc" style="left:1076px;width:49px">损耗<b class="m" style="font-weight:400">(%)</b></div>
<div class="hc" style="left:1125px;width:61px">单重<b class="m" style="font-weight:400">(kg)</b></div>
<div class="hc" style="left:1186px;width:61px">总重<b class="m" style="font-weight:400">(kg)</b></div>
<div class="hc" style="left:1247px;width:71px">钢筋归类</div>
<div class="hc" style="left:1318px;width:46px;text-align:left;padding-left:12px">搭接形式</div>
<div class="rc" style="left:183px;width:34px;background:#fddba6;color:#660066;text-align:center;line-height:18px"><b class="m" style="font-weight:400;font-size:12px">1*</b></div>
<div class="rc" style="left:217px;width:73px"></div>
<div class="rc" style="left:290px;width:56px;background:#d6e8f7;border-left:2px solid #111"></div>
<div class="rc" style="left:346px;width:36px"></div>
<div class="rc" style="left:382px;width:33px"></div>
<div class="rc" style="left:415px;width:201px"></div>
<div class="rc" style="left:616px;width:166px"></div>
<div class="rc" style="left:782px;width:156px"></div>
<div class="rc" style="left:938px;width:61px"></div>
<div class="rc" style="left:999px;width:38px"></div>
<div class="rc" style="left:1037px;width:39px"></div>
<div class="rc" style="left:1076px;width:49px"></div>
<div class="rc" style="left:1125px;width:61px"></div>
<div class="rc" style="left:1186px;width:61px"></div>
<div class="rc" style="left:1247px;width:71px"></div>
<div class="rc" style="left:1318px;width:46px"></div>
<div class="b" style="left:183px;top:688px;width:1183px;height:16px;background:#f0f0f0"></div>
<div class="b" style="left:201px;top:688px;width:823px;height:16px;background:#c8c8c8"></div>
<svg style="position:absolute;left:188px;top:691px" width="8" height="10"><path d="M6 1L2 5l4 4" fill="none" stroke="#444" stroke-width="1.500"/></svg>
<svg style="position:absolute;left:1351px;top:691px" width="8" height="10"><path d="M2 1l4 4-4 4" fill="none" stroke="#444" stroke-width="1.500"/></svg>

<!-- status bar -->
<div class="st m" style="left:0;width:148px;line-height:17px">X=231133 Y=4654</div>
<div class="st" style="left:150px;width:77px">层高:<b class="m" style="font-weight:400">2.15m</b></div>
<div class="st" style="left:230px;width:98px">底标高:<b class="m" style="font-weight:400">-2.2m</b></div>
<div class="st m" style="left:330px;width:48px;line-height:17px">2</div>
<div class="st" style="left:380px;width:915px">按鼠标左键指定第一个角点，或拾取构件图元</div>
<div class="st m" style="left:1296px;width:70px;line-height:17px">666.8 FPS</div>

<!-- taskbar -->
<div class="b" style="left:0;top:728px;width:1366px;height:40px;background:#01090f"></div>
<div class="b" style="left:0;top:728px;width:48px;height:40px;background:#000"></div>
<div class="b" style="left:48px;top:728px;width:344px;height:40px;background:#303030"></div>
<svg style="position:absolute;left:16px;top:739px" width="16" height="16" viewBox="0 0 16 16" fill="#fff"><path d="M0 2.500l6.500-1v6H0zM7.500 1.300L16 0v7.500H7.500zM0 8.500h6.500v6l-6.500-1zM7.500 8.500H16V16l-8.500-1.300z"/></svg>
<svg style="position:absolute;left:57px;top:737px" width="22" height="22"><circle cx="11" cy="11" r="9" fill="none" stroke="#e4e4e4" stroke-width="2.500"/></svg>
<span class="t" style="left:84px;top:741px;color:#8a8a8a;font-size:14px">在这里输入你要搜索的内容</span>
<svg style="position:absolute;left:365px;top:739px" width="12" height="20" viewBox="0 0 12 20" fill="none" stroke="#808080"><rect x="3.500" y="1" width="5" height="10" rx="2.500"/><path d="M1 8c0 6 10 6 10 0M6 13v4M3 17h6"/></svg>
<svg style="position:absolute;left:405px;top:738px" width="22" height="20" viewBox="0 0 22 20" fill="none" stroke="#fff" stroke-width="1.200"><rect x="6" y="3" width="10" height="14"/><path d="M3 5H1v10h2M19 5h2v10h-2"/></svg>
<svg style="position:absolute;left:455px;top:737px" width="22" height="22" viewBox="0 0 22 22" fill="#e8e8e8"><path d="M10 10C4 10 1 7 2 3s8-3 8 1zM12 10c0-6 3-9 7-8s3 8-1 8zM12 12c6 0 9 3 8 7s-8 3-8-1zM10 12c0 6-3 9-7 8s-3-8 1-8z"/></svg>
<svg style="position:absolute;left:507px;top:736px" width="24" height="24" viewBox="0 0 24 24"><path d="M4 13h15c0-6-3-8-7-8s-8 3-8 9 4 8 8 8c3 0 5-1 7-3" fill="none" stroke="#e8e8e8" stroke-width="3"/><path d="M3 20C2 15 8 6 19 2c3 0 3 3 1 6" fill="none" stroke="#888" stroke-width="1"/></svg>
<svg style="position:absolute;left:557px;top:737px" width="22" height="22" viewBox="0 0 22 22" fill="none" stroke="#b8b8b8" stroke-width="1.500"><path d="M17 4C10 1 3 5 3 11s5 9 9 9 7-4 6-7-5-4-7-2-1 5 1 5M7 11c0-3 3-5 7-5"/></svg>
<svg style="position:absolute;left:609px;top:736px" width="24" height="24" viewBox="0 0 24 24"><path d="M4 13h15c0-6-3-8-7-8s-8 3-8 9 4 8 8 8c3 0 5-1 7-3" fill="none" stroke="#0078d7" stroke-width="4.500"/></svg>
<svg style="position:absolute;left:658px;top:736px" width="24" height="24" viewBox="0 0 24 24"><path d="M4 13h15c0-6-3-8-7-8s-8 3-8 9 4 8 8 8c3 0 5-1 7-3" fill="none" stroke="#2d9ce8" stroke-width="4"/><path d="M2 21C0 17 10 5 20 2c4-1 3 5 0 8" fill="none" stroke="#f0c528" stroke-width="1.800"/></svg>
<svg style="position:absolute;left:707px;top:737px" width="24" height="22" viewBox="0 0 24 22"><path d="M1 1h9l2 3h11v17H1z" fill="#f2c84a"/><path d="M1 7h22v14H1z" fill="#ffe08a"/><path d="M1 15h22v6H1z" fill="#5ab0e6"/><rect x="8" y="16" width="8" height="5" fill="#1f6fa8"/></svg>
<svg style="position:absolute;left:756px;top:735px" width="24" height="26" viewBox="0 0 24 26"><path d="M22 2C10 2 2 8 2 15s6 10 11 9 8-6 5-10-8-2-8 1c0-3 4-7 9-8z" fill="#1f9cf0"/></svg>
<div class="b" style="left:793px;top:728px;width:48px;height:40px;background:#353f46"></div>
<svg style="position:absolute;left:805px;top:736px" width="24" height="24" viewBox="0 0 24 24"><rect width="24" height="24" rx="4" fill="#0a8ce6"/><path d="M12 3v18M5 9v3c0 3 4 3 7 3s7 0 7-3V9M8 3a1 1 0 0 1 8 0" fill="none" stroke="#fff" stroke-width="2"/></svg>
<svg style="position:absolute;left:854px;top:736px" width="24" height="24" viewBox="0 0 24 24"><rect width="24" height="24" rx="1" fill="#e8a020"/><rect x="3" y="4" width="15" height="17" fill="#fbf2c8"/><path d="M5 8h10M5 12h10M5 16h8" stroke="#999"/><path d="M20 3L11 18l3 1 8-14z" fill="#c33"/></svg>
<svg style="position:absolute;left:903px;top:736px" width="24" height="24" viewBox="0 0 24 24"><circle cx="12" cy="12" r="10" fill="#6cc83c"/><circle cx="12" cy="12" r="6" fill="#e8f8c8"/><path d="M12 7l4 5H8z" fill="#4aa020"/><path d="M8 13h8v3H8z" fill="#6cc83c"/><path d="M3 20L18 2M4 22c6 2 16-5 17-12" fill="none" stroke="#2c8a2c"/></svg>
<div class="bar" style="left:748px;width:40px"></div>
<div class="bar" style="left:793px;width:48px;background:#6cb2e8"></div>
<div class="bar" style="left:846px;width:40px"></div>
<div class="bar" style="left:895px;width:40px"></div>
<span class="t" style="left:1026px;top:740px;color:#ccc">链接</span>
<svg style="position:absolute;left:1058px;top:741px" width="16" height="10"><path d="M2 8l6-6 6 6" fill="none" stroke="#ddd" stroke-width="1.200"/></svg>
<svg style="position:absolute;left:1081px;top:738px" width="18" height="18" viewBox="0 0 18 18" fill="none" stroke="#e8e8e8"><rect x="3" y="6" width="12" height="8" fill="#e8e8e8"/><path d="M2 1v4h3V1M3.500 5v5"/><rect x="15" y="8" width="1.500" height="4" fill="#e8e8e8"/></svg>
<svg style="position:absolute;left:1107px;top:739px" width="18" height="18" viewBox="0 0 18 18" fill="none" stroke="#ccc" stroke-width="1.200"><path d="M2 15C2 7 7 3 15 2M5 15C5 9 9 6 15 5M8 15c0-3 3-6 7-7"/><circle cx="3" cy="15.500" r="1" fill="#ccc"/></svg>
<svg style="position:absolute;left:1129px;top:738px" width="18" height="18" viewBox="0 0 18 18" fill="none" stroke="#e0e0e0" stroke-width="1.200"><path d="M1 7h3l4-4v12l-4-4H1zM11 6c1 2 1 4 0 6M14 3c3 4 3 8 0 12"/></svg>
<svg style="position:absolute;left:1153px;top:740px" width="25" height="16" viewBox="0 0 25 16" fill="none" stroke="#e0e0e0"><rect x=".5" y=".5" width="24" height="15"/><path d="M3 4h19M3 7h19M3 10h19M6 13h13" stroke-dasharray="2 1"/></svg>
<span class="t" style="left:1188px;top:740px;color:#e8e8e8;font-size:13px">中</span>
<svg style="position:absolute;left:1214px;top:738px" width="16" height="18" viewBox="0 0 16 18"><path d="M2 2l12-2 2 14-14 4z" fill="#e8431c"/><path d="M11 5H6v3h4v3H5" fill="none" stroke="#fff" stroke-width="2"/></svg>
<span class="t" style="left:1261px;top:730px;color:#e0e0e0;font-size:12px">21:37</span>
<span class="t" style="left:1247px;top:749px;color:#e0e0e0;font-size:12px">2018/4/19</span>
<svg style="position:absolute;left:1324px;top:738px" width="28" height="28" viewBox="0 0 28 28"><path d="M1 1h15v13H9l-3 3v-3H1z" fill="#fff"/><path d="M4 5h9M4 8h9M4 11h9" stroke="#444"/><circle cx="17" cy="17" r="8" fill="#3a3a3a"/></svg>
<span class="t" style="left:1337px;top:747px;color:#fff;font-weight:bold">1</span>
</body></html>
